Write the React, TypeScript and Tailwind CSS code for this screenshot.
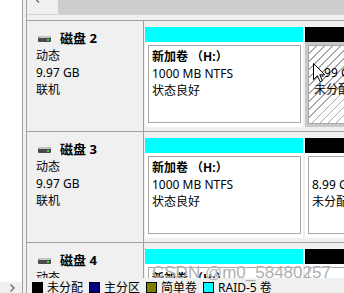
import type { ReactNode } from "react";

type Part = {
  color: string;
  width: string;
  lines: ReactNode[];
  selected?: boolean;
};

function DiskIcon() {
  return (
    <svg width="13" height="6" viewBox="0 0 13 6" className="ml-[2px] shrink-0">
      <rect x="0" y="0" width="13" height="6" rx="1" fill="#4a4a4a" />
      <rect x="0" y="0" width="13" height="2" rx="1" fill="#c4c4c4" />
      <rect x="9" y="3" width="2" height="2" fill="#38d14a" />
    </svg>
  );
}

function Column({ part }: { part: Part }) {
  const text = part.lines.map((l, i) => (
    <div key={i} className="h-[17px] whitespace-nowrap">{l}</div>
  ));
  return (
    <div className={`flex shrink-0 flex-col ${part.width}`}>
      <div className={`h-[15px] ${part.color}`} />
      {part.selected ? (
        <div className="h-[85px] bg-[#c8c8c8] p-[3px]">
          <div className="h-full border border-[#a8a8a8] bg-[repeating-linear-gradient(135deg,#ffffff_0px,#ffffff_4.6px,#a9a9a9_4.6px,#a9a9a9_5.7px)] pl-[5px] pt-[1px] leading-[17px]">
            {text}
          </div>
        </div>
      ) : (
        <div className="h-[85px] bg-white pb-[4px] pl-[3px] pr-[2px] pt-[3px]">
          <div className="h-full border border-[#a8a8a8] bg-white pl-[3px] pt-[2px] leading-[17px]">
            {text}
          </div>
        </div>
      )}
    </div>
  );
}

function DiskRow({ n, selected }: { n: number; selected?: boolean }) {
  const parts: Part[] = [
    {
      color: "bg-[#00ffff]",
      width: "w-[158px]",
      lines: [
        <span className="font-bold">新加卷 （H:）</span>,
        "1000 MB NTFS",
        "状态良好",
      ],
    },
    {
      color: "bg-black",
      width: "w-[110px]",
      lines: ["", "8.99 GB", "未分配"],
      selected,
    },
  ];

  return (
    <div className="flex h-[111px] shrink-0 border-t border-[#a0a0a0]">
      {/* disk label */}
      <div className="w-[117px] shrink-0 border-r border-[#a0a0a0] bg-[#f0f0f0] pl-[9px] pt-[9px] leading-[17px]">
        <div className="flex h-[17px] items-center gap-[9px]">
          <DiskIcon />
          <span className="text-[13px] font-bold">磁盘 {n}</span>
        </div>
        <div>动态</div>
        <div>9.97 GB</div>
        <div>联机</div>
      </div>

      {/* partitions */}
      <div className="flex gap-[2px] pl-[1px] pt-[6px]">
        {parts.map((p, i) => (
          <Column key={i} part={p} />
        ))}
      </div>
    </div>
  );
}

const legend = [
  { color: "bg-black", label: "未分配" },
  { color: "bg-[#000080]", label: "主分区" },
  { color: "bg-[#808000]", label: "简单卷" },
  { color: "bg-[#00ffff]", label: "RAID-5 卷" },
];

export default function App() {
  return (
    <div className="relative flex h-[293px] w-[344px] overflow-hidden bg-[#f0f0f0] font-['Noto_Sans','Noto_Sans_CJK_SC',sans-serif] text-[12px] text-black">
      {/* left pane */}
      <div className="flex w-[22px] shrink-0 flex-col bg-white">
        <div className="flex-1" />
        <div className="flex h-[11px] items-center justify-end bg-[#f0f0f0] pr-[7px]">
          <svg width="5" height="8" viewBox="0 0 5 8">
            <path d="M0.5 0.5 L4 4 L0.5 7.5" fill="none" stroke="#606060" strokeWidth="1.2" />
          </svg>
        </div>
      </div>
      <div className="w-[1px] shrink-0 bg-[#a0a0a0]" />
      <div className="w-[3px] shrink-0 bg-[#f0f0f0]" />
      <div className="w-[1px] shrink-0 bg-[#a0a0a0]" />

      {/* graphical view */}
      <div className="flex min-w-0 flex-1 flex-col">
        <div className="flex h-[14px] shrink-0">
          <div className="flex w-[31px] justify-center overflow-hidden bg-[#f0f0f0]">
            <svg width="6" height="9" viewBox="0 0 6 9" className="-mt-[6px] ml-[-12px]">
              <path d="M5 0.5 L1 4.5 L5 8.5" fill="none" stroke="#606060" strokeWidth="1.2" />
            </svg>
          </div>
          <div className="flex-1 bg-[#cdcdcd]" />
        </div>
        <div className="h-[1px] shrink-0 bg-[#d4d4d4]" />
        <div className="h-[5px] shrink-0" />

        <div className="min-h-0 flex-1 overflow-hidden">
          <DiskRow n={2} selected />
          <DiskRow n={3} />
          <DiskRow n={4} />
        </div>

        {/* legend */}
        <div className="flex h-[15px] shrink-0 items-start bg-[#f0f0f0] pl-[5px] pt-[1px] leading-[17px]">
          {legend.map((l) => (
            <div key={l.label} className="flex items-start">
              <div className={`mt-[3px] h-[11px] w-[11px] border border-black ${l.color}`} />
              <span className="ml-[4px] mr-[6px] whitespace-nowrap">{l.label}</span>
            </div>
          ))}
        </div>
      </div>

      {/* mouse pointer */}
      <svg width="13" height="20" viewBox="0 0 13 20" className="absolute left-[313px] top-[63px]">
        <path
          d="M0.5 0.5 L0.5 16.5 L4.5 12.8 L7.2 18.8 L9.4 17.8 L6.8 11.8 L11.8 11.8 Z"
          fill="#ffffff"
          stroke="#000000"
          strokeWidth="1"
        />
      </svg>

      {/* watermark */}
      <div className="absolute left-[152px] top-[263px] whitespace-nowrap font-['Liberation_Sans',sans-serif] text-[17px] leading-[20px] text-[#a8a8a8] opacity-90 [text-shadow:0_0_1px_#ffffff]">
        CSDN @m0_58480257
      </div>
    </div>
  );
}
